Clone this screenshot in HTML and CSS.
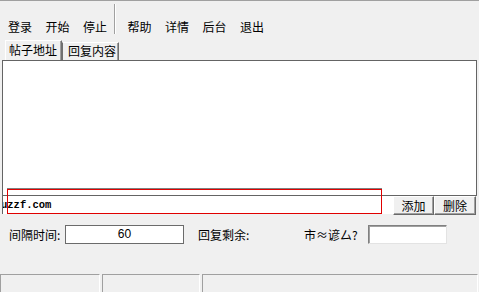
FILE: index.html
```html
<!DOCTYPE html>
<html lang="zh-CN">
<head>
    <meta charset="UTF-8">
    <title>自动回帖</title>
    <link rel="stylesheet" href="styles.css">
</head>
<body>
    <div class="window">
        <div class="toolbar">
            <span class="tool">登录</span>
            <span class="tool">开始</span>
            <span class="tool">停止</span>
            <span class="sep"></span>
            <span class="tool">帮助</span>
            <span class="tool">详情</span>
            <span class="tool">后台</span>
            <span class="tool">退出</span>
        </div>
        <div class="tabs">
            <span class="tab active">帖子地址</span>
            <span class="tab second">回复内容</span>
        </div>
        <div class="editor">
            <div class="list"></div>
            <div class="addrow">
                <div class="urlbox"><span class="url">uzzf.com</span></div>
                <button class="btn add">添加</button>
                <button class="btn del">删除</button>
            </div>
            <div class="focus"></div>
        </div>
        <div class="settings">
            <span class="label first">间隔时间:</span>
            <span class="field interval">60</span>
            <span class="label remain">回复剩余:</span>
            <span class="label garbled">市≈谚厶?</span>
            <span class="field sunken"></span>
        </div>
        <div class="status">
            <span class="panel p1"></span>
            <span class="panel p2"></span>
            <span class="panel p3"></span>
        </div>
    </div>
</body>
</html>
```
FILE: styles.css
```css
html, body {
    margin: 0;
    padding: 0;
}
body {
    width: 479px;
    height: 292px;
    overflow: hidden;
    background-color: #f0f0f0;
    font-family: "Noto Sans CJK SC", "DejaVu Sans", sans-serif;
    font-size: 12px;
    color: #000;
}
.window {
    height: 292px;
    display: flex;
    flex-direction: column;
    box-sizing: border-box;
    border-top: 1px solid #a0a0a0;
}

/* toolbar */
.toolbar {
    display: flex;
    height: 40px;
    box-sizing: border-box;
    padding: 3px 0 0 8px;
}
.tool {
    margin-top: 16px;
    margin-right: 13.5px;
    line-height: 14px;
    height: 14px;
}
.sep {
    width: 1px;
    height: 30px;
    background-color: #a0a0a0;
    border-right: 1px solid #fff;
    margin: 0 12px 0 -7px;
}

/* tabs */
.tabs {
    display: flex;
    align-items: flex-end;
    height: 19px;
    padding-left: 5px;
}
.tab {
    display: block;
    line-height: 16px;
    height: 17px;
    background-color: #f0f0f0;
    border-top: 1px solid #fff;
    border-left: 1px solid #fff;
    border-right: 1px solid #707070;
    box-shadow: inset -1px 0 0 #a0a0a0;
}
.tab.active {
    height: 19px;
    line-height: 18px;
    padding: 0 4px 0 3px;
}
.tab.second {
    border-left: 1px solid #707070;
    padding: 0 2px 0 5px;
}

/* editor area */
.editor {
    position: relative;
    margin: 0 2px 0 2px;
}
.list {
    height: 136px;
    box-sizing: border-box;
    background-color: #fff;
    border: 1px solid #646464;
}
.addrow {
    display: flex;
    height: 19px;
}
.urlbox {
    width: 391px;
    height: 18px;
    box-sizing: border-box;
    background-color: #fff;
    border-left: 1px solid #646464;
    overflow: hidden;
}
.url {
    display: block;
    margin-left: -2px;
    font-family: "Liberation Mono", monospace;
    font-size: 10.5px;
    font-weight: bold;
    line-height: 18px;
}
.btn {
    height: 19px;
    padding: 0;
    box-sizing: border-box;
    background-color: #f0f0f0;
    border: 1px solid;
    border-color: #fff #696969 #696969 #fff;
    box-shadow: inset -1px -1px 0 #a0a0a0;
    font-family: "Noto Sans CJK SC", sans-serif;
    font-size: 12px;
    line-height: 16px;
    color: #000;
}
.btn.add {
    width: 41px;
}
.btn.del {
    width: 42px;
}
.focus {
    position: absolute;
    z-index: 1;
    left: 5px;
    top: 129px;
    width: 375px;
    height: 25px;
    box-sizing: border-box;
    box-shadow: inset 0 0 0 1px #e00000, 0 -1px 0 #808080;
    forced-color-adjust: none;
}

/* settings row */
.settings {
    display: flex;
    align-items: center;
    height: 19px;
    margin-top: 10px;
    padding-left: 9px;
}
.label {
    line-height: 14px;
}
.label.first {
    width: 56px;
}
.field {
    height: 19px;
    box-sizing: border-box;
    background-color: #fff;
    line-height: 17px;
    text-align: center;
    font-family: "Liberation Sans", sans-serif;
}
.field.interval {
    width: 119px;
    border: 1px solid #6b6b6b;
}
.label.remain {
    margin-left: 14px;
    width: 106px;
}
.label.garbled {
    width: 64px;
}
.field.sunken {
    width: 79px;
    border: 1px solid;
    border-color: #808080 #e3e3e3 #e3e3e3 #808080;
    box-shadow: inset 1px 1px 0 #a0a0a0;
}

/* status bar */
.status {
    display: flex;
    margin-top: auto;
    height: 18px;
}
.panel {
    display: block;
    height: 18px;
    box-sizing: border-box;
    border-top: 1px solid #a0a0a0;
    border-left: 1px solid #a0a0a0;
    border-right: 1px solid #fff;
}
.panel.p1 {
    width: 100px;
    margin-right: 2px;
}
.panel.p2 {
    width: 98px;
    margin-right: 2px;
}
.panel.p3 {
    flex: 1;
    margin-right: 1px;
}
```
